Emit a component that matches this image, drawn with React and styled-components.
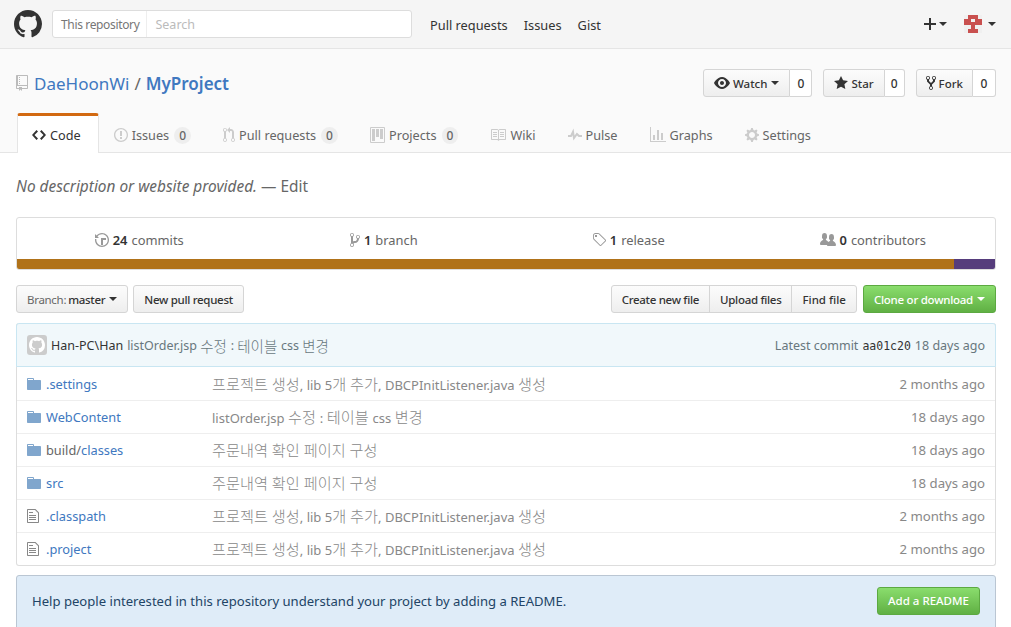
import React from "react";
import styled, { createGlobalStyle } from "styled-components";

const GlobalStyle = createGlobalStyle`
  html, body {
    margin: 0;
    padding: 0;
    overflow: hidden;
    background: #fff;
    color: #333;
    font-family: "Noto Sans", "Noto Sans CJK KR", sans-serif;
    font-size: 13px;
  }
  * { box-sizing: border-box; }
`;

const paths = {
  mark: "M8 0C3.58 0 0 3.58 0 8c0 3.54 2.29 6.53 5.47 7.59.4.07.55-.17.55-.38 0-.19-.01-.82-.01-1.49-2.01.37-2.53-.49-2.69-.94-.09-.23-.48-.94-.82-1.13-.28-.15-.68-.52-.01-.53.63-.01 1.08.58 1.23.82.72 1.21 1.87.87 2.33.66.07-.52.28-.87.51-1.07-1.78-.2-3.64-.89-3.64-3.95 0-.87.31-1.59.82-2.15-.08-.2-.36-1.02.08-2.12 0 0 .67-.21 2.2.82.64-.18 1.32-.27 2-.27.68 0 1.36.09 2 .27 1.53-1.04 2.2-.82 2.2-.82.44 1.1.16 1.92.08 2.12.51.56.82 1.27.82 2.15 0 3.07-1.87 3.75-3.65 3.95.29.25.54.73.54 1.48 0 1.07-.01 1.93-.01 2.2 0 .21.15.46.55.38A8.013 8.013 0 0016 8c0-4.42-3.58-8-8-8z",
  repo: "M4 9H3V8h1v1zm0-3H3v1h1V6zm0-2H3v1h1V4zm0-2H3v1h1V2zm8-1v12c0 .55-.45 1-1 1H6v2l-1.5-1.5L3 16v-2H1c-.55 0-1-.45-1-1V1c0-.55.45-1 1-1h10c.55 0 1 .45 1 1zm-1 10H1v2h2v-1h3v1h5v-2zm0-10H2v9h9V1z",
  eye: "M8.06 2C3 2 0 8 0 8s3 6 8.06 6C13 14 16 8 16 8s-3-6-7.94-6zM8 12c-2.2 0-4-1.78-4-4 0-2.2 1.8-4 4-4 2.22 0 4 1.8 4 4 0 2.22-1.78 4-4 4zm2-4c0 1.11-.89 2-2 2-1.11 0-2-.89-2-2 0-1.11.89-2 2-2 1.11 0 2 .89 2 2z",
  star: "M14 6l-4.9-.64L7 1 4.9 5.36 0 6l3.6 3.26L2.67 14 7 11.67 11.33 14l-.93-4.74L14 6z",
  fork: "M8 1a1.993 1.993 0 00-1 3.72V6L5 8 3 6V4.72A1.993 1.993 0 002 1a1.993 1.993 0 00-1 3.72V6.5l3 3v1.78A1.993 1.993 0 005 15a1.993 1.993 0 001-3.72V9.5l3-3V4.72A1.993 1.993 0 008 1zM2 4.2C1.34 4.2.8 3.65.8 3c0-.65.55-1.2 1.2-1.2.65 0 1.2.55 1.2 1.2 0 .65-.55 1.2-1.2 1.2zm3 10c-.66 0-1.2-.55-1.2-1.2 0-.65.55-1.2 1.2-1.2.65 0 1.2.55 1.2 1.2 0 .65-.55 1.2-1.2 1.2zm3-10c-.66 0-1.2-.55-1.2-1.2 0-.65.55-1.2 1.2-1.2.65 0 1.2.55 1.2 1.2 0 .65-.55 1.2-1.2 1.2z",
  code: "M9.5 3L8 4.5 11.5 8 8 11.5 9.5 13 14 8 9.5 3zm-5 0L0 8l4.5 5L6 11.5 2.5 8 6 4.5 4.5 3z",
  issue: "M7 2.3c3.14 0 5.7 2.56 5.7 5.7s-2.56 5.7-5.7 5.7A5.71 5.71 0 011.3 8c0-3.14 2.56-5.7 5.7-5.7zM7 1C3.14 1 0 4.14 0 8s3.14 7 7 7 7-3.14 7-7-3.14-7-7-7zm1 3H6v5h2V4zm0 6H6v2h2v-2z",
  pull: "M11 11.28V5c-.03-.78-.34-1.47-.94-2.06C9.46 2.35 8.78 2.03 8 2H7V0L4 3l3 3V4h1c.27.02.48.11.69.31.21.2.3.42.31.69v6.28A1.993 1.993 0 0010 15a1.993 1.993 0 001-3.72zm-1 2.92c-.66 0-1.2-.55-1.2-1.2 0-.65.55-1.2 1.2-1.2.65 0 1.2.55 1.2 1.2 0 .65-.55 1.2-1.2 1.2zM4 3c0-1.11-.89-2-2-2a1.993 1.993 0 00-1 3.72v6.56A1.993 1.993 0 002 15a1.993 1.993 0 001-3.72V4.72c.59-.34 1-.98 1-1.72zm-.8 10c0 .66-.55 1.2-1.2 1.2-.65 0-1.2-.55-1.2-1.2 0-.65.55-1.2 1.2-1.2.65 0 1.2.55 1.2 1.2zM2 4.2C1.34 4.2.8 3.65.8 3c0-.65.55-1.2 1.2-1.2.65 0 1.2.55 1.2 1.2 0 .65-.55 1.2-1.2 1.2z",
  project: "M10 12h3V2h-3v10zm-4-2h3V2H6v8zm-4 4h3V2H2v12zm-1 1h13V1H1v14zM14 0H1a1 1 0 00-1 1v14a1 1 0 001 1h13a1 1 0 001-1V1a1 1 0 00-1-1z",
  book: "M3 5h4v1H3V5zm0 3h4V7H3v1zm0 2h4V9H3v1zm11-5h-4v1h4V5zm0 2h-4v1h4V7zm0 2h-4v1h4V9zm2-6v9c0 .55-.45 1-1 1H9.5l-1 1-1-1H2c-.55 0-1-.45-1-1V3c0-.55.45-1 1-1h5.5l1 1 1-1H15c.55 0 1 .45 1 1zm-8 .5L7.5 3H2v9h6V3.5zm7-.5H9.5l-.5.5V12h6V3z",
  pulse: "M11.5 8L8.8 5.4 6.6 8.5 5.5 1.6 2.38 8H0v2h3.6l.9-1.8.9 5.4L9 8.5l1.6 1.5H14V8h-2.5z",
  graph: "M16 14v1H0V0h1v14h15zM5 13H3V8h2v5zm4 0H7V3h2v10zm4 0h-2V6h2v7z",
  gear: "M14 8.77v-1.6l-1.94-.64-.45-1.09.88-1.84-1.13-1.13-1.81.91-1.09-.45-.69-1.92h-1.6l-.63 1.94-1.11.45-1.84-.88-1.13 1.13.91 1.81-.45 1.09L0 7.23v1.59l1.94.64.45 1.09-.88 1.84 1.13 1.13 1.81-.91 1.09.45.69 1.92h1.59l.63-1.94 1.11-.45 1.84.88 1.13-1.13-.92-1.81.47-1.09L14 8.75v.02zM7 11c-1.66 0-3-1.34-3-3s1.34-3 3-3 3 1.34 3 3-1.34 3-3 3z",
  history: "M8 13H6V6h5v2H8v5zM7 1C4.81 1 2.87 2.02 1.59 3.59L0 2v4h4L2.5 4.5C3.55 3.17 5.17 2.3 7 2.3c3.14 0 5.7 2.56 5.7 5.7s-2.56 5.7-5.7 5.7A5.71 5.71 0 011.3 8c0-.34.03-.67.09-1H.08C.03 7.33 0 7.66 0 8c0 3.86 3.14 7 7 7s7-3.14 7-7-3.14-7-7-7z",
  branch: "M10 5c0-1.11-.89-2-2-2a1.993 1.993 0 00-1 3.72v.3c-.02.52-.23.98-.63 1.38-.4.4-.86.61-1.38.63-.83.02-1.48.16-2 .45V4.72a1.993 1.993 0 00-1-3.72C.88 1 0 1.89 0 3a2 2 0 001 1.72v6.56c-.59.35-1 .99-1 1.72 0 1.11.89 2 2 2 1.11 0 2-.89 2-2 0-.53-.2-1-.53-1.36.09-.06.48-.41.59-.47.25-.11.56-.17.94-.17 1.05-.05 1.95-.45 2.75-1.25S8.95 7.77 9 6.73h-.02C9.59 6.37 10 5.73 10 5zM2 1.8c.66 0 1.2.55 1.2 1.2 0 .65-.55 1.2-1.2 1.2C1.35 4.2.8 3.65.8 3c0-.65.55-1.2 1.2-1.2zm0 12.41c-.66 0-1.2-.55-1.2-1.2 0-.65.55-1.2 1.2-1.2.65 0 1.2.55 1.2 1.2 0 .65-.55 1.2-1.2 1.2zm6-8c-.66 0-1.2-.55-1.2-1.2 0-.65.55-1.2 1.2-1.2.65 0 1.2.55 1.2 1.2 0 .65-.55 1.2-1.2 1.2z",
  tag: "M7.73 1.73C7.26 1.26 6.62 1 5.96 1H3.5C2.13 1 1 2.13 1 3.5v2.47c0 .66.27 1.3.73 1.77l6.06 6.06c.39.39 1.02.39 1.41 0l4.59-4.59a.996.996 0 000-1.41L7.73 1.73zM2.38 7.09c-.31-.3-.47-.7-.47-1.13V3.5c0-.88.72-1.59 1.59-1.59h2.47c.42 0 .83.16 1.13.47l6.14 6.13-4.73 4.73-6.13-6.15zM3.01 3h2v2H3V3h.01z",
  people: "M16 12.999c0 .439-.45 1-1 1H7.995c-.539 0-.994-.447-.995-.999H1c-.54 0-1-.561-1-1 0-2.634 3-4 3-4s.229-.409 0-1c-.841-.621-1.058-.59-1-3 .058-2.419 1.367-3 2.5-3s2.442.58 2.5 3c.058 2.41-.159 2.379-1 3-.229.59 0 1 0 1s1.549.711 2.42 2.088C9.196 9.369 10 8.999 10 8.999s.229-.409 0-1c-.841-.62-1.058-.59-1-3 .058-2.419 1.367-3 2.5-3s2.437.581 2.495 3c.059 2.41-.158 2.38-1 3-.229.59 0 1 0 1s3.005 1.366 3.005 4z",
  dir: "M13 4H7V3c0-.66-.31-1-1-1H1c-.55 0-1 .45-1 1v10c0 .55.45 1 1 1h12c.55 0 1-.45 1-1V5c0-.55-.45-1-1-1zM6 4H1V3h5v1z",
  file: "M6 5H2V4h4v1zM2 8h7V7H2v1zm0 2h7V9H2v1zm0 2h7v-1H2v1zm10-7.5V14c0 .55-.45 1-1 1H1c-.55 0-1-.45-1-1V2c0-.55.45-1 1-1h7.5L12 4.5zM11 5L8 2H1v12h10V5z",
  plus: "M12 9H7v5H5V9H0V7h5V2h2v5h5v2z",
};

const widths = { repo: 12, star: 14, fork: 10, code: 14, issue: 14, pull: 12, project: 15, pulse: 14, gear: 14, history: 14, branch: 10, tag: 14, dir: 14, file: 12, plus: 12 };

const Svg = styled.svg`
  display: block;
  flex: none;
  fill: ${(p) => p.$color || "currentColor"};
`;

const Icon = ({ name, size = 16, color }) => {
  const w = widths[name] || 16;
  return (
    <Svg viewBox={`0 0 ${w} 16`} width={(size * w) / 16} height={size} $color={color}>
      <path fillRule="evenodd" d={paths[name]} />
    </Svg>
  );
};

const Caret = styled.span`
  display: inline-block;
  flex: none;
  width: 0;
  height: 0;
  margin-left: ${(p) => p.$gap || 0}px;
  border-top: 4px solid ${(p) => p.$color || "currentColor"};
  border-left: 4px solid transparent;
  border-right: 4px solid transparent;
`;

// Hangul is set larger than the latin text around it, as in the original font mix
const Ko = styled.span`
  font-size: ${(p) => p.$size || 15.2}px;
  font-weight: 300;
`;

const Mixed = ({ text, size }) =>
  text.split(/([가-힣][가-힣 ]*)/).map((part, i) =>
    i % 2 ? (
      <Ko key={i} $size={size}>
        {part}
      </Ko>
    ) : (
      part
    )
  );

/* top bar */
const Header = styled.header`
  display: flex;
  align-items: center;
  height: 49px;
  padding: 0 15px 0 14px;
  background: #f5f5f5;
  border-bottom: 1px solid #e5e5e5;
`;

const Logo = styled.div`
  color: #333;
  margin-right: 10px;
`;

const Search = styled.div`
  display: flex;
  width: 360px;
  height: 28px;
  background: #fff;
  border: 1px solid #ddd;
  border-radius: 3px;
  font-size: 12px;
  line-height: 28px;
`;

const Scope = styled.span`
  padding: 0 7px 0 8px;
  color: #767676;
  letter-spacing: -0.35px;
  border-right: 1px solid #eee;
`;

const Placeholder = styled.span`
  padding-left: 8px;
  font-size: 12.5px;
  color: #bbb;
`;

const TopNav = styled.nav`
  display: flex;
  gap: 16px;
  margin-left: 18px;
  padding-top: 2px;
  color: #333;
  font-size: 12.8px;
`;

const TopRight = styled.div`
  display: flex;
  align-items: center;
  margin-left: auto;
  color: #333;
`;

const Avatar = styled.svg`
  display: block;
  margin-left: 17px;
`;

/* repo head */
const RepoHead = styled.section`
  background: #fafafa;
  border-bottom: 1px solid #e5e5e5;
  height: 104px;
  padding: 20px 15px 0 16px;
`;

const TitleRow = styled.div`
  display: flex;
  align-items: center;
  height: 28px;
`;

const Title = styled.h1`
  display: flex;
  align-items: center;
  margin: 0;
  padding-top: 2px;
  font-size: 17px;
  font-weight: 400;
  color: #666;
  line-height: 28px;
`;

const RepoIcon = styled.span`
  margin: -2px 6px 0 0;
  color: #bbb;
`;

const RepoLink = styled.a`
  color: #4078c0;
  font-weight: ${(p) => (p.$bold ? 600 : 400)};
`;

const Slash = styled.span`
  margin: 0 5px;
`;

const Actions = styled.div`
  display: flex;
  gap: 11px;
  margin-left: auto;
`;

const ActionGroup = styled.div`
  display: flex;
  height: 28px;
  font-size: 11.5px;
  font-weight: 500;
`;

const ActionButton = styled.div`
  display: flex;
  align-items: center;
  gap: 3px;
  padding: 0 ${(p) => p.$pad || 10}px;
  background: linear-gradient(#fcfcfc, #eee);
  border: 1px solid #d5d5d5;
  border-radius: 3px 0 0 3px;
  color: #333;
`;

const Count = styled.div`
  display: flex;
  align-items: center;
  justify-content: center;
  width: ${(p) => p.$w || 22}px;
  background: #fff;
  border: 1px solid #d5d5d5;
  border-left: 0;
  border-radius: 0 3px 3px 0;
  font-size: 12px;
`;

const Tabs = styled.nav`
  display: flex;
  height: 40px;
  margin: 16px 0 0 1px;
  font-size: 12.7px;
  color: #666;
`;

const Tab = styled.div`
  display: flex;
  align-items: center;
  gap: 4px;
  height: 40px;
  padding: ${(p) => (p.$active ? "1px 17px 0 14px" : "4px 16px 0")};
  margin-right: ${(p) => (p.$active ? "-1px" : "0")};
  color: ${(p) => (p.$active ? "#333" : "#666")};
  background: ${(p) => (p.$active ? "#fff" : "transparent")};
  border: ${(p) => (p.$active ? "1px solid #e5e5e5" : "0")};
  border-top: ${(p) => (p.$active ? "3px solid #d26911" : "0")};
  border-bottom: 0;
  border-radius: 3px 3px 0 0;
`;

const TabIcon = styled.span`
  color: #ccc;
`;

const Counter = styled.span`
  padding: 0 5px;
  margin-left: 1px;
  background: #eee;
  border-radius: 20px;
  font-size: 12px;
  font-weight: 500;
  line-height: 17px;
`;

/* page body */
const Main = styled.main`
  padding: 0 15px 0 16px;
`;

const Description = styled.div`
  height: 64px;
  padding-top: 24px;
  font-size: 15.4px;
  line-height: 20px;
  color: #666;
`;

const Edit = styled.span`
  font-style: normal;
`;

const Blurb = styled.em`
  font-style: italic;
`;

const Summary = styled.div`
  border: 1px solid #ddd;
  border-radius: 3px;
  overflow: hidden;
`;

const Numbers = styled.div`
  display: grid;
  grid-template-columns: repeat(4, 1fr);
  height: 41px;
  padding-top: 2px;
`;

const NumberCell = styled.div`
  display: flex;
  align-items: center;
  justify-content: center;
  gap: 4px;
  color: #666;
  font-size: 12.9px;
  b {
    color: #333;
    font-weight: 600;
  }
`;

const LangBar = styled.div`
  display: flex;
  height: 10px;
`;

const Lang = styled.span`
  display: block;
  background: ${(p) => p.$color};
  flex: ${(p) => p.$grow} 0 0;
`;

const Toolbar = styled.div`
  display: flex;
  margin-top: 15px;
  height: 28px;
`;

const Button = styled.div`
  display: flex;
  align-items: center;
  height: 28px;
  padding: 0 10px;
  margin-left: ${(p) => p.$left || 0}px;
  font-size: 11.5px;
  font-weight: 500;
  letter-spacing: ${(p) => (p.$tight ? "-0.3px" : "0")};
  color: #333;
  background: linear-gradient(#fcfcfc, #eee);
  border: 1px solid #d5d5d5;
  border-radius: 3px;
`;

const Muted = styled.span`
  color: #666;
  font-weight: 400;
  margin-right: 2px;
`;

const ButtonGroup = styled.div`
  display: flex;
  margin-left: auto;
  ${Button} {
    border-radius: 0;
    margin-left: -1px;
  }
  ${Button}:first-child {
    border-radius: 3px 0 0 3px;
  }
  ${Button}:last-child {
    border-radius: 0 3px 3px 0;
  }
`;

const GreenButton = styled.div`
  display: flex;
  align-items: center;
  height: 28px;
  padding: 0 10px;
  margin-left: ${(p) => p.$left || 0}px;
  font-size: 11.5px;
  font-weight: 500;
  letter-spacing: ${(p) => (p.$tight ? "-0.25px" : "0")};
  color: #fff;
  background: linear-gradient(#8add6d, #60b044);
  border: 1px solid #5ca941;
  border-radius: 3px;
  flex: none;
`;

const FileBox = styled.div`
  margin-top: 10px;
  border: 1px solid #ddd;
  border-top: 0;
  border-radius: 3px;
`;

const Tease = styled.div`
  display: flex;
  align-items: center;
  height: 44px;
  margin: 0 -1px;
  padding: 0 10px;
  background: #f1f8fb;
  border: 1px solid #c9e6f2;
  border-radius: 3px 3px 0 0;
  font-size: 12.5px;
  color: #68777d;
  white-space: pre;
`;

const TeaseAvatar = styled.div`
  display: flex;
  align-items: center;
  justify-content: center;
  width: 20px;
  height: 20px;
  margin-right: 4px;
  background: #ccc;
  border-radius: 3px;
  color: #fff;
`;

const Author = styled.span`
  color: #333;
  margin-right: 4px;
`;

const TeaseRight = styled.div`
  margin-left: auto;
`;

const Sha = styled.code`
  font-family: "DejaVu Sans Mono", monospace;
  font-size: 11.5px;
  color: #333;
  margin: 0 4px;
`;

const FileRow = styled.div`
  display: grid;
  grid-template-columns: 19px 166px 1fr auto;
  align-items: center;
  height: 33px;
  padding: 0 10px;
  font-size: 12.8px;
  border-top: ${(p) => (p.$first ? "0" : "1px solid #eee")};
`;

const FileName = styled.a`
  color: #4078c0;
`;

const DirPart = styled.span`
  color: #666;
`;

const Message = styled.span`
  margin-bottom: 2px;
  font-size: 13px;
  color: #888;
  white-space: pre;
`;

const Age = styled.span`
  color: #888;
  font-size: 13.2px;
`;

const Prompt = styled.div`
  display: flex;
  align-items: flex-start;
  justify-content: space-between;
  margin-top: 9px;
  padding: 11px 15px 16px;
  font-size: 13.1px;
  line-height: 28px;
  color: #246;
  background: #dfecf8;
  border: 1px solid #bac6d3;
  border-radius: 3px;
`;

const files = [
  { icon: "dir", name: ".settings", msg: "프로젝트 생성, lib 5개 추가, DBCPInitListener.java 생성", age: "2 months ago" },
  { icon: "dir", name: "WebContent", msg: "listOrder.jsp 수정 : 테이블 css 변경", age: "18 days ago" },
  { icon: "dir", dir: "build/", name: "classes", msg: "주문내역 확인 페이지 구성", age: "18 days ago" },
  { icon: "dir", name: "src", msg: "주문내역 확인 페이지 구성", age: "18 days ago" },
  { icon: "file", name: ".classpath", msg: "프로젝트 생성, lib 5개 추가, DBCPInitListener.java 생성", age: "2 months ago" },
  { icon: "file", name: ".project", msg: "프로젝트 생성, lib 5개 추가, DBCPInitListener.java 생성", age: "2 months ago" },
];

const tabs = [
  { icon: "issue", label: "Issues", count: 0 },
  { icon: "pull", label: "Pull requests", count: 0 },
  { icon: "project", label: "Projects", count: 0 },
  { icon: "book", label: "Wiki" },
  { icon: "pulse", label: "Pulse" },
  { icon: "graph", label: "Graphs" },
  { icon: "gear", label: "Settings" },
];

const App = () => (
  <>
    <GlobalStyle />
    <Header>
      <Logo>
        <Icon name="mark" size={28} />
      </Logo>
      <Search>
        <Scope>This repository</Scope>
        <Placeholder>Search</Placeholder>
      </Search>
      <TopNav>
        <span>Pull requests</span>
        <span>Issues</span>
        <span>Gist</span>
      </TopNav>
      <TopRight>
        <Icon name="plus" size={16} />
        <Caret $gap={3} />
        <Avatar width="18" height="18" viewBox="0 0 18 18">
          <rect width="18" height="18" fill="#f0f0f0" />
          <path fill="#c9504f" d="M4 0h10v4h4v6h-7v4h3v4H4v-4h3v-4H0V4h4z" />
          <path fill="#f0f0f0" d="M7 4h4v3H7z" />
        </Avatar>
        <Caret $gap={6} />
      </TopRight>
    </Header>

    <RepoHead>
      <TitleRow>
        <Title>
          <RepoIcon>
            <Icon name="repo" size={16} />
          </RepoIcon>
          <RepoLink>DaeHoonWi</RepoLink>
          <Slash>/</Slash>
          <RepoLink $bold>MyProject</RepoLink>
        </Title>
        <Actions>
          <ActionGroup>
            <ActionButton>
              <Icon name="eye" size={16} />
              Watch
              <Caret $gap={1} />
            </ActionButton>
            <Count>0</Count>
          </ActionGroup>
          <ActionGroup>
            <ActionButton>
              <Icon name="star" size={16} />
              Star
            </ActionButton>
            <Count $w={20}>0</Count>
          </ActionGroup>
          <ActionGroup>
            <ActionButton $pad={9}>
              <Icon name="fork" size={16} />
              Fork
            </ActionButton>
            <Count $w={23}>0</Count>
          </ActionGroup>
        </Actions>
      </TitleRow>
      <Tabs>
        <Tab $active>
          <Icon name="code" size={16} />
          Code
        </Tab>
        {tabs.map((t) => (
          <Tab key={t.label}>
            <TabIcon>
              <Icon name={t.icon} size={16} />
            </TabIcon>
            {t.label}
            {t.count !== undefined && <Counter>{t.count}</Counter>}
          </Tab>
        ))}
      </Tabs>
    </RepoHead>

    <Main>
      <Description>
        <Blurb>No description or website provided.</Blurb> <Edit>— Edit</Edit>
      </Description>

      <Summary>
        <Numbers>
          <NumberCell>
            <Icon name="history" size={16} color="#999" />
            <b>24</b> commits
          </NumberCell>
          <NumberCell>
            <Icon name="branch" size={16} color="#999" />
            <b>1</b> branch
          </NumberCell>
          <NumberCell>
            <Icon name="tag" size={16} color="#999" />
            <b>1</b> release
          </NumberCell>
          <NumberCell>
            <Icon name="people" size={16} color="#999" />
            <b>0</b> contributors
          </NumberCell>
        </Numbers>
        <LangBar>
          <Lang $color="#b07219" $grow={937} />
          <Lang $color="#563d7c" $grow={41} />
        </LangBar>
      </Summary>

      <Toolbar>
        <Button $tight>
          <Muted>Branch:</Muted> master
          <Caret $gap={4} />
        </Button>
        <Button $left={5} $tight>
          New pull request
        </Button>
        <ButtonGroup>
          <Button $tight>Create new file</Button>
          <Button $tight>Upload files</Button>
          <Button>Find file</Button>
        </ButtonGroup>
        <GreenButton $left={6} $tight>
          Clone or download
          <Caret $gap={4} />
        </GreenButton>
      </Toolbar>

      <FileBox>
        <Tease>
          <TeaseAvatar>
            <Icon name="mark" size={16} />
          </TeaseAvatar>
          <Author>Han-PC\Han</Author>
          <Mixed text="listOrder.jsp 수정 : 테이블 css 변경" size={14.5} />
          <TeaseRight>
            Latest commit<Sha>aa01c20</Sha>18 days ago
          </TeaseRight>
        </Tease>
        {files.map((f, i) => (
          <FileRow key={f.name} $first={i === 0}>
            <Icon name={f.icon} size={16} color={f.icon === "dir" ? "#80a6cd" : "#888"} />
            <FileName>
              {f.dir && <DirPart>{f.dir}</DirPart>}
              {f.name}
            </FileName>
            <Message>
              <Mixed text={f.msg} />
            </Message>
            <Age>{f.age}</Age>
          </FileRow>
        ))}
      </FileBox>

      <Prompt>
        Help people interested in this repository understand your project by adding a README.
        <GreenButton>Add a README</GreenButton>
      </Prompt>
    </Main>
  </>
);

export default App;
